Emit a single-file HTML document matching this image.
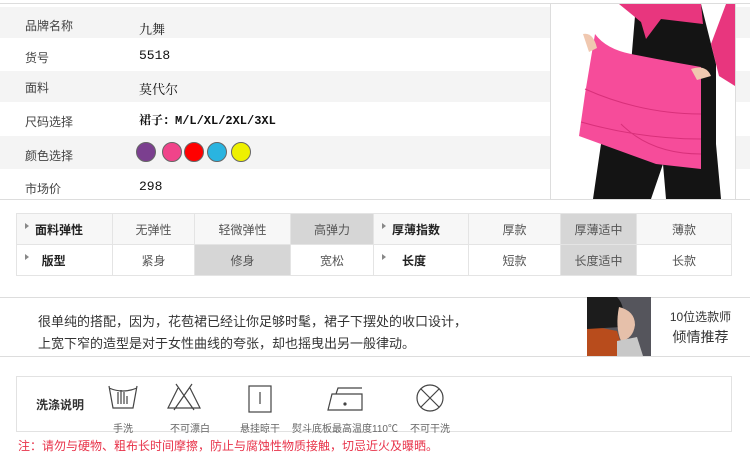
<!DOCTYPE html>
<html><head><meta charset="utf-8"><style>
*{margin:0;padding:0;box-sizing:border-box}
body{width:750px;height:466px;background:#fff;font-family:"Liberation Sans","Noto Sans CJK SC",sans-serif;position:relative;overflow:hidden;color:#333}
.abs{position:absolute}
.row{position:absolute;left:0;width:750px}
.g{background:#f4f4f4}
.lbl{position:absolute;left:25px;font-size:12px;color:#444}
.val{position:absolute;left:139px;font-size:13px;color:#111;font-family:"Liberation Mono","Noto Serif CJK SC",monospace}
table{border-collapse:collapse}
td{border:1px solid #e4e4e4;text-align:center;font-size:12px;color:#555;height:31px}
td.h{font-weight:bold;color:#222;text-align:left;padding-left:8px}
td.s{background:#d6d6d6}
.tri{display:inline-block;width:0;height:0;border-left:4px solid #888;border-top:3px solid transparent;border-bottom:3px solid transparent;vertical-align:5px;margin-right:6px}
.dot{position:absolute;top:142px;width:20px;height:20px;border-radius:50%;border:1px solid #666}
.ic{position:absolute;top:420px;text-align:center;font-size:10px;color:#666;width:80px}
</style></head><body>
<div class="abs" style="left:0;top:3px;width:750px;height:1px;background:#ddd"></div>
<div class="row g" style="top:7px;height:31px"></div>
<div class="row g" style="top:71px;height:31px"></div>
<div class="row g" style="top:136px;height:33px"></div>
<div class="abs" style="left:0;top:199px;width:750px;height:1px;background:#ddd"></div>
<div class="lbl" style="top:17px">品牌名称</div><div class="val" style="top:19px">九舞</div>
<div class="lbl" style="top:49px">货号</div><div class="val" style="top:48px">5518</div>
<div class="lbl" style="top:79px">面料</div><div class="val" style="top:79px">莫代尔</div>
<div class="lbl" style="top:113px">尺码选择</div><div class="val" style="top:111px;font-weight:bold;font-size:12px">裙子：M/L/XL/2XL/3XL</div>
<div class="lbl" style="top:147px">颜色选择</div>
<div class="dot" style="left:136px;background:#7b3f8f"></div>
<div class="dot" style="left:162px;background:#f0448a"></div>
<div class="dot" style="left:184px;background:#f00"></div>
<div class="dot" style="left:207px;background:#2ab4e0"></div>
<div class="dot" style="left:231px;background:#eef000"></div>
<div class="lbl" style="top:180px">市场价</div><div class="val" style="top:179px">298</div>
<div class="abs" style="left:550px;top:3px;width:186px;height:197px;background:#fff;border:1px solid #ddd;overflow:hidden">
<svg width="184" height="195" viewBox="0 0 184 195">
<path d="M85 0 L150 0 L165 60 L165 140 L170 195 L115 195 L112 160 L100 195 L42 195 L50 140 L80 60Z" fill="#141414"/>
<path d="M68 0 L150 0 L152 20 L110 15 L95 35 L90 18Z" fill="#e8367e"/>
<path d="M160 40 L175 0 L184 0 L184 82 L168 72Z" fill="#e8367e"/>
<path d="M44 30 Q55 45 80 50 Q120 58 150 63 L150 165 L105 160 L28 132 L34 90 Z" fill="#f64c9a"/>
<path d="M34 85 Q90 110 150 110 M30 118 Q90 135 150 135 M70 120 Q100 150 150 150" stroke="#d8307a" fill="none"/>
<path d="M32 30 Q42 28 46 44 L38 48 Z" fill="#f0c8b0"/>
<path d="M140 65 Q155 60 160 72 L146 76Z" fill="#f0c8b0"/>
</svg></div>
<table class="abs" style="left:16px;top:213px;width:716px">
<tr style="background:#f7f7f7"><td class="h" style="width:96px"><span class="tri"></span>面料弹性</td><td style="width:82px">无弹性</td><td style="width:96px">轻微弹性</td><td class="s" style="width:83px">高弹力</td><td class="h" style="width:95px"><span class="tri"></span>厚薄指数</td><td style="width:92px">厚款</td><td class="s" style="width:76px">厚薄适中</td><td>薄款</td></tr>
<tr><td class="h"><span class="tri"></span>&nbsp;&nbsp;版型</td><td>紧身</td><td class="s">修身</td><td>宽松</td><td class="h"><span class="tri"></span>&nbsp;&nbsp;&nbsp;长度</td><td>短款</td><td class="s">长度适中</td><td>长款</td></tr>
</table>
<div class="abs" style="left:0;top:297px;width:750px;height:60px;border-top:1px solid #ddd;border-bottom:1px solid #ddd"></div>
<div class="abs" style="left:38px;top:311px;font-size:13px;color:#333;line-height:22px">很单纯的搭配，因为，花苞裙已经让你足够时髦，裙子下摆处的收口设计，<br>上宽下窄的造型是对于女性曲线的夸张，却也摇曳出另一般律动。</div>
<div class="abs" style="left:587px;top:297px;width:64px;height:59px;overflow:hidden">
<svg width="64" height="59"><rect width="64" height="59" fill="#55555c"/><path d="M0 28 L30 34 L38 59 L0 59Z" fill="#b84c1c"/><path d="M0 0 L30 0 Q40 10 34 30 L0 32Z" fill="#1c1c1c"/><path d="M32 10 Q48 14 48 28 Q46 42 34 44 Q28 30 32 10Z" fill="#e6c0aa"/><path d="M30 44 L50 40 L56 59 L30 59Z" fill="#c8c8c8"/></svg></div>
<div class="abs" style="left:651px;top:308px;width:99px;text-align:center;font-size:12px;color:#333">10位选款师</div>
<div class="abs" style="left:651px;top:327px;width:99px;text-align:center;font-size:14px;color:#333">倾情推荐</div>
<div class="abs" style="left:16px;top:376px;width:716px;height:56px;border:1px solid #e2e2e2"></div>
<div class="abs" style="left:36px;top:396px;font-size:12px;font-weight:bold;color:#333">洗涤说明</div>
<svg class="abs" style="left:100px;top:382px" width="360" height="32" fill="none" stroke="#444" stroke-width="1.2">
<path d="M9 4 L13 26 L33 26 L37 4 M9 6 Q23 12 37 6"/><path d="M18 22 L18 10 M21 22 L21 8 M24 22 L24 10 M27 22 L27 14"/>
<path d="M78 6 L68 26 L100 26 L90 6 M76 2 L94 28 M92 2 L74 28"/>
<rect x="149" y="4" width="22" height="26"/><path d="M160 10 L160 22"/>
<path d="M228 28 L232 12 L262 12 L262 28Z M236 12 L238 6 L262 6"/><circle cx="245" cy="22" r="1" fill="#444"/>
<circle cx="330" cy="16" r="13"/><path d="M321 7 L339 25 M339 7 L321 25"/>
</svg>
<div class="ic" style="left:83px">手洗</div>
<div class="ic" style="left:150px">不可漂白</div>
<div class="ic" style="left:220px">悬挂晾干</div>
<div class="ic" style="left:285px;width:120px">熨斗底板最高温度110℃</div>
<div class="ic" style="left:390px">不可干洗</div>
<div class="abs" style="left:18px;top:437px;font-size:12px;color:#e8334a">注：请勿与硬物、粗布长时间摩擦，防止与腐蚀性物质接触，切忌近火及曝晒。</div>
</body></html>
